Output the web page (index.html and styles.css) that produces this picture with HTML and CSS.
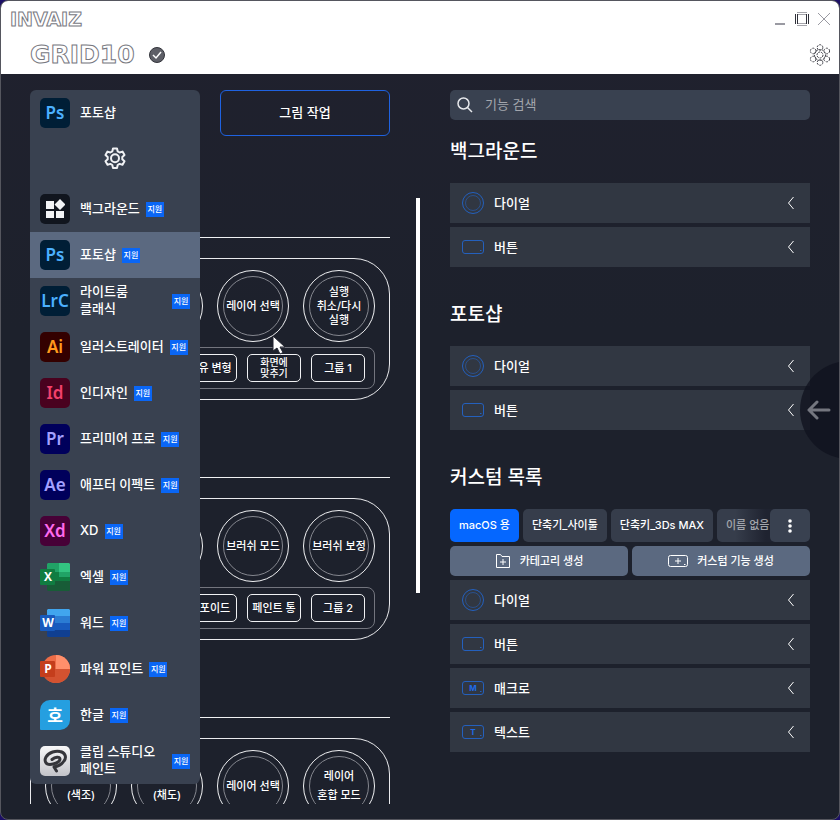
FILE: index.html
```html
<!DOCTYPE html>
<html lang="ko">
<head>
<meta charset="utf-8">
<meta name="viewport" content="width=device-width, initial-scale=1">
<title>INVAIZ GRID10</title>
<link rel="stylesheet" href="styles.css">
</head>
<body>
<svg class="defs" aria-hidden="true">
  <symbol id="gear" viewBox="0 0 24 24"><path d="M10 2.5h4l.7 2.9 1.9 1.1 2.9-.9 2 3.5-2.200 2v2.200l2.200 2-2 3.500-2.900-.9-1.900 1.100-.7 2.900h-4l-.7-2.900-1.900-1.100-2.900.9-2-3.500 2.200-2v-2.200l-2.200-2 2-3.500 2.900.9 1.900-1.100z"/><circle cx="12" cy="12.200" r="4"/></symbol>
  <symbol id="dial" viewBox="0 0 24 24"><circle cx="12" cy="12" r="10.500"/><circle cx="12" cy="12" r="7.500" opacity=".6"/></symbol>
  <symbol id="key" viewBox="0 0 24 24"><rect x="1.500" y="5.500" width="21" height="13" rx="2.500"/><path d="M19 15.500h1.500"/></symbol>
  <symbol id="chevron" viewBox="0 0 8 14"><path d="M6.500 1 1.500 7l5 6"/></symbol>
</svg>
<div class="window">
  <header class="titlebar">
    <div class="bar">
      <span class="brand">INVAIZ</span>
      <div class="controls">
        <button aria-label="최소화"><svg width="14" height="14" viewBox="0 0 14 14"><path d="M2 12h10" stroke="#9a9aa2" stroke-width="2"/></svg></button>
        <button aria-label="최대화"><svg width="14" height="14" viewBox="0 0 14 14" fill="none"><path d="M2 .5h10M2 13.500h10M3 2.500h8M3 11.500h8" stroke="#a5a5ab"/><path d="M.5 2v10M13.500 2v10M2.500 2v10M11.500 2v10" stroke="#30313a"/></svg></button>
        <button aria-label="닫기"><svg width="14" height="14" viewBox="0 0 14 14" fill="none" stroke="#9a9aa2"><path d="m1 1 12 12M13 1 1 13"/></svg></button>
      </div>
    </div>
    <div class="bar device">
      <h1>GRID10</h1>
      <svg width="16" height="16" viewBox="0 0 16 16" fill="none"><circle cx="8" cy="8" r="7.500" fill="#5e5f67" stroke="#33343b"/><path d="m4 8 3 3 5-6" stroke="#fff" stroke-width="1.500"/></svg>
      <button class="config" aria-label="설정"><svg width="22" height="22" viewBox="0 0 22 22" fill="none" stroke="#3e3f47" stroke-dasharray="2 1"><circle cx="11" cy="11" r="3"/><circle cx="11" cy="11" r="5.500"/><circle cx="11" cy="3.500" r="2.800"/><circle cx="11" cy="18.500" r="2.800"/><circle cx="4.200" cy="7" r="2.800"/><circle cx="17.800" cy="7" r="2.800"/><circle cx="4.200" cy="15" r="2.800"/><circle cx="17.800" cy="15" r="2.800"/></svg></button>
    </div>
  </header>

  <main>
    <section class="workspace">
      <div class="top">
        <div class="picker">
          <div class="dropdown">
            <button class="app current"><span class="ico ps">Ps</span><span>포토샵</span></button>
            <button class="manage" aria-label="앱 설정"><svg width="24" height="24"><use href="#gear"/></svg></button>
            <ul>
              <li><button class="app"><span class="ico bg"><svg width="20" height="20" viewBox="0 0 20 20" fill="#f2f3f5"><path d="M1 2h8v8H1zM1 12h8v7H1zM11 12h8v7h-8zM15 0l5.500 5.500L15 11 9.500 5.500z"/></svg></span><span>백그라운드</span><em>지원</em></button></li>
              <li><button class="app selected"><span class="ico ps">Ps</span><span>포토샵</span><em>지원</em></button></li>
              <li><button class="app"><span class="ico ps">LrC</span><span class="wide">라이트룸<br>클래식</span><em>지원</em></button></li>
              <li><button class="app"><span class="ico ai">Ai</span><span>일러스트레이터</span><em>지원</em></button></li>
              <li><button class="app"><span class="ico id">Id</span><span>인디자인</span><em>지원</em></button></li>
              <li><button class="app"><span class="ico pr">Pr</span><span>프리미어 프로</span><em>지원</em></button></li>
              <li><button class="app"><span class="ico pr">Ae</span><span>애프터 이펙트</span><em>지원</em></button></li>
              <li><button class="app"><span class="ico xd">Xd</span><span>XD</span><em>지원</em></button></li>
              <li><button class="app"><svg class="office" width="30" height="30" viewBox="0 0 30 30"><path fill="#21a366" d="M8 1h11v9H7V2z"/><path fill="#33c481" d="M19 1h10l1 1v8H19z"/><path fill="#107c41" d="M7 10h12v9H7zM19 10h11v9H19z"/><path fill="#21a366" d="M19 10h11v5H19z"/><path fill="#185c37" d="M7 19h23v9l-1 1H8l-1-1z"/><rect y="7" width="15" height="16" rx="1" fill="#107c41"/><text x="8" y="19">X</text></svg><span>엑셀</span><em>지원</em></button></li>
              <li><button class="app"><svg class="office" width="30" height="30" viewBox="0 0 30 30"><path fill="#41a5ee" d="M8 1h21l1 1v6H7V2z"/><path fill="#2b7cd3" d="M7 8h23v7H7z"/><path fill="#185abd" d="M7 15h23v7H7z"/><path fill="#103f91" d="M7 22h23v6l-1 1H8l-1-1z"/><rect y="7" width="15" height="16" rx="1" fill="#185abd"/><text x="8" y="19">W</text></svg><span>워드</span><em>지원</em></button></li>
              <li><button class="app"><svg class="office" width="30" height="30" viewBox="0 0 30 30"><circle cx="16" cy="15" r="14" fill="#ed6c47"/><path fill="#ff8f6b" d="M16 1a14 14 0 0 1 14 14H16z"/><path fill="#d35230" d="M2 15h28a14 14 0 0 1-28 0z"/><rect y="7" width="15" height="16" rx="1" fill="#c43e1c"/><text x="8" y="19">P</text></svg><span>파워 포인트</span><em>지원</em></button></li>
              <li><button class="app"><span class="ico han">호</span><span>한글</span><em>지원</em></button></li>
              <li><button class="app"><span class="ico clip"><svg width="26" height="26" viewBox="0 0 26 26" fill="none" stroke="#35353a" stroke-width="3" stroke-linecap="round" stroke-linejoin="round"><path d="M10 11.500C13 9 18 8 18 11c0 3-6 5.500-10 5.500C3.500 16.500 2 12.500 4 9 7 4 14 2.500 18 3.500c5 1 7 5.500 4 9.500-2.500 3.500-6 5.500-10 6l2.500 4"/></svg></span><span class="wide">클립 스튜디오<br>페인트</span><em>지원</em></button></li>
            </ul>
          </div>
        </div>
        <button class="profile">그림 작업</button>
      </div>

      <div class="groups">
        <article class="group">
          <div class="pad">
            <div class="dials"><button><span></span></button><button><span></span></button><button><span>레이어 선택</span></button><button><span>실행<br>취소/다시<br>실행</span></button></div>
            <div class="keys"><button></button><button></button><button>자유 변형</button><button class="two">화면에<br>맞추기</button><button>그룹 1</button></div>
          </div>
        </article>
        <article class="group">
          <div class="pad">
            <div class="dials"><button><span></span></button><button><span></span></button><button><span>브러쉬 모드</span></button><button><span>브러쉬 보정</span></button></div>
            <div class="keys"><button></button><button></button><button>스포이드</button><button>페인트 통</button><button>그룹 2</button></div>
          </div>
        </article>
        <article class="group">
          <div class="pad">
            <div class="dials"><button><span class="loose"><br>(색조)</span></button><button><span class="loose"><br>(채도)</span></button><button><span>레이어 선택</span></button><button><span class="loose">레이어<br>혼합 모드</span></button></div>
            <div class="keys"><button></button><button></button><button></button><button></button><button></button></div>
          </div>
        </article>
      </div>
      <svg class="pointer" width="14" height="20" viewBox="0 0 14 20"><path d="M1 1v15l4-3 3 6 3-1.500-3-5.500h5z" fill="#fff" stroke="#222530"/></svg>
    </section>

    <div class="track"><div class="thumb"></div></div>

    <aside>
      <label class="search">
        <svg width="16" height="16" viewBox="0 0 16 16" fill="none" stroke="#e6e8ec" stroke-width="1.500"><circle cx="6.500" cy="6.500" r="5.500"/><path d="m10.500 10.500 4.500 4.500"/></svg>
        <input type="search" placeholder="기능 검색" aria-label="기능 검색">
      </label>

      <section class="features">
        <h2>백그라운드</h2>
        <button class="row"><svg><use href="#dial"/></svg>다이얼<svg class="chev"><use href="#chevron"/></svg></button>
        <button class="row"><svg><use href="#key"/></svg>버튼<svg class="chev"><use href="#chevron"/></svg></button>
      </section>

      <section class="features">
        <h2>포토샵</h2>
        <button class="row"><svg><use href="#dial"/></svg>다이얼<svg class="chev"><use href="#chevron"/></svg></button>
        <button class="row"><svg><use href="#key"/></svg>버튼<svg class="chev"><use href="#chevron"/></svg></button>
      </section>

      <section class="features">
        <h2>커스텀 목록</h2>
        <div class="tabs">
          <button class="on">macOS 용</button><button>단축기_사이툴</button><button>단축키_3Ds MAX</button><button class="faded">이름 없음</button>
          <button class="more" aria-label="더 보기"><svg width="4" height="14" viewBox="0 0 4 14" fill="#fff"><circle cx="2" cy="2" r="1.800"/><circle cx="2" cy="7" r="1.800"/><circle cx="2" cy="12" r="1.800"/></svg></button>
        </div>
        <div class="create">
          <button><svg width="16" height="16" viewBox="0 0 16 16"><path d="M1.500 1.500h4l1.500 2h7.500v11h-13zM8 6v6M5 9h6"/></svg>카테고리 생성</button>
          <button><svg width="20" height="14" viewBox="0 0 20 14"><rect x=".5" y="1.500" width="19" height="11" rx="2"/><path d="M10 4v6M7 7h6M16 10.500h1.500"/></svg>커스텀 기능 생성</button>
        </div>
        <button class="row"><svg><use href="#dial"/></svg>다이얼<svg class="chev"><use href="#chevron"/></svg></button>
        <button class="row"><svg><use href="#key"/></svg>버튼<svg class="chev"><use href="#chevron"/></svg></button>
        <button class="row"><svg viewBox="0 0 24 24"><use href="#key"/><text x="12" y="15">M</text></svg>매크로<svg class="chev"><use href="#chevron"/></svg></button>
        <button class="row"><svg viewBox="0 0 24 24"><use href="#key"/><text x="12" y="15">T</text></svg>텍스트<svg class="chev"><use href="#chevron"/></svg></button>
      </section>
    </aside>
  </main>

  <button class="back" aria-label="뒤로"><svg width="24" height="20" viewBox="0 0 24 20" fill="none" stroke="#74767f" stroke-width="3" stroke-linecap="round" stroke-linejoin="round"><path d="M22 10H2M10 2l-8 8 8 8"/></svg></button>
</div>
</body>
</html>
```
FILE: styles.css
```css
* { box-sizing: border-box; }

body {
  margin: 0;
  background: #1c0f66;
  color: #fff;
  font: 500 13px/17px Inter, "Noto Sans CJK KR", sans-serif;
}

button {
  margin: 0;
  padding: 0;
  border: 0;
  background: none;
  color: inherit;
  font: inherit;
}

ul { margin: 0; padding: 0; list-style: none; }
svg { flex: none; display: block; }
.defs { position: absolute; width: 0; height: 0; }

.window {
  position: relative;
  display: flex;
  flex-direction: column;
  height: 100vh;
  border: 1px solid #55565e;
  border-radius: 8px;
  background: linear-gradient(#20212e, #1d212c 40%);
  overflow: hidden;
}

/* Title bar */
.titlebar { height: 73px; background: #fff; }
.bar { display: flex; align-items: center; height: 36px; padding: 0 8px 0 9px; }

.brand, h1 {
  margin: 0;
  color: #fff;
  font: 700 19px/36px "DejaVu Sans", sans-serif;
  -webkit-text-stroke: 1px #77787f;
}

.controls { display: flex; gap: 8px; margin-left: auto; }
.device { padding-left: 29px; gap: 14px; }
h1 { font-size: 25px; }
.config { margin-left: auto; }

/* Main columns */
main {
  flex: 1;
  display: grid;
  grid-template-columns: 1fr 60px 1fr;
  min-height: 0;
  padding: 16px 29px 15px;
}

.workspace { position: relative; display: flex; flex-direction: column; min-width: 0; min-height: 0; }
.top { flex: none; display: grid; grid-template-columns: 1fr 1fr; gap: 20px; height: 46px; }
.profile { padding-bottom: 2px; border: 1px solid #1f62e0; border-radius: 6px; }

/* App picker */
.picker { position: relative; z-index: 2; }
.dropdown {
  position: absolute;
  inset: 0 0 auto;
  border-radius: 6px;
  background: #394150;
  overflow: hidden;
}

.app {
  display: flex;
  align-items: center;
  width: 100%;
  height: 46px;
  padding: 0 10px;
  text-align: left;
}
.selected { background: #5b6980; }
.app > :first-child { margin-right: 10px; }
.app > span + span, .app > svg + span { padding-bottom: 2px; }
.wide { flex: 1; }

.app em {
  flex: none;
  width: 18px;
  margin-left: 6px;
  background: #0a66f5;
  font-size: 8px;
  font-style: normal;
  line-height: 15px;
  text-align: center;
}
.app .wide + em { margin-left: 0; }

.manage { display: flex; justify-content: center; width: 100%; height: 50px; padding-top: 10px; }
.manage svg { fill: none; stroke: #f0f1f4; stroke-width: 2; stroke-linejoin: round; }

.ico {
  flex: none;
  display: flex;
  align-items: center;
  justify-content: center;
  width: 30px;
  height: 30px;
  border-radius: 5px;
  font: 600 17px/30px "Noto Sans", sans-serif;
}
.ps { background: #001e36; color: #4bb0ff; }
.bg { background: #11151e; }
.ai { background: #330000; color: #ff9a1c; }
.id { background: #49021f; color: #f2406c; }
.pr { background: #00005b; color: #a3a0ff; }
.xd { background: #470137; color: #ff69ee; }
.han { border-radius: 10px 1px 10px 1px; background: #259fe0; font-family: "Noto Sans CJK KR", sans-serif; font-weight: 700; }
.clip { background: linear-gradient(#f8f8f9, #c4c4c9); }
.office text { fill: #fff; font: 700 12px "Open Sans", sans-serif; text-anchor: middle; }

/* Device groups */
.groups { flex: 1; min-height: 0; padding-top: 101px; overflow: hidden; }
.group { height: 240px; padding-top: 20px; border-top: 1px solid #f0f1f3; }
.pad { padding: 11px 14px 10px; border: 1px solid #e9eaed; border-radius: 36px; font-size: 11px; }
.dials { display: flex; justify-content: space-between; }

.dials button {
  width: 72px;
  height: 72px;
  padding: 5px;
  border: 1px solid #f0f1f3;
  border-radius: 50%;
}
.dials span {
  display: flex;
  align-items: center;
  justify-content: center;
  height: 60px;
  border: 1px solid #85878f;
  border-radius: 50%;
  line-height: 14px;
  white-space: nowrap;
}
.dials .loose { line-height: 19px; }

.keys {
  display: grid;
  grid-template-columns: repeat(5, 1fr);
  gap: 10px;
  margin-top: 5px;
  padding: 6px 9px;
  border: 1px solid #73757e;
  border-radius: 8px;
}
.keys button { height: 28px; border: 1px solid #f0f1f3; border-radius: 5px; white-space: nowrap; }
.keys .two { font-size: 10px; line-height: 11px; }

.pointer { position: absolute; left: 242px; top: 245px; }

/* Scrollbar */
.track { padding: 108px 0 0 26px; }
.thumb { width: 4px; height: 395px; background: #fff; }

/* Feature list */
.search {
  display: flex;
  align-items: center;
  gap: 12px;
  height: 30px;
  padding: 0 7px;
  border-radius: 5px;
  background: #394150;
}
.search input {
  flex: 1;
  min-width: 0;
  padding: 0 0 2px;
  border: 0;
  outline: 0;
  background: none;
  color: #fff;
  font: inherit;
  font-weight: 400;
}
.search input::placeholder { color: #a3a6ad; }

.features { display: flex; flex-direction: column; gap: 4px; }
.features + .features { margin-top: 16px; }
h2 { margin: 0 0 -4px; font-size: 19px; font-weight: 500; line-height: 63px; }

.row {
  display: flex;
  align-items: center;
  gap: 9px;
  height: 40px;
  padding: 0 15px 0 11px;
  background: #313742;
}
.row svg { width: 24px; height: 24px; fill: none; stroke: #2460bd; }
.row text { fill: #1f6bea; stroke: none; font: 700 8px Inter, sans-serif; text-anchor: middle; }
.row .chev { width: 8px; height: 14px; margin-left: auto; stroke: #fff; }

.tabs { position: relative; display: flex; gap: 4px; height: 33px; overflow: hidden; font-size: 11px; }
.tabs button { flex: none; padding: 0 9px; border-radius: 5px; background: #363d4b; }
.tabs .on { background: #0567ff; }
.tabs .faded { background: linear-gradient(90deg, #363d4b 30%, #1f2330 80%); color: #a2a5ac; }
.tabs .more {
  position: absolute;
  inset: 0 0 0 auto;
  display: flex;
  align-items: center;
  justify-content: center;
  width: 40px;
  background: #394150;
}

.create { display: grid; grid-template-columns: 1fr 1fr; gap: 4px; font-size: 11px; }
.create button {
  display: flex;
  align-items: center;
  justify-content: center;
  gap: 9px;
  height: 30px;
  border-radius: 5px;
  background: #5b6980;
}
.create svg { fill: none; stroke: #fff; }

/* Edge button */
.back {
  position: absolute;
  right: -59px;
  top: 360px;
  width: 98px;
  height: 98px;
  padding-left: 7px;
  border-radius: 50%;
  background: rgb(15 17 29 / 75%);
}
```
